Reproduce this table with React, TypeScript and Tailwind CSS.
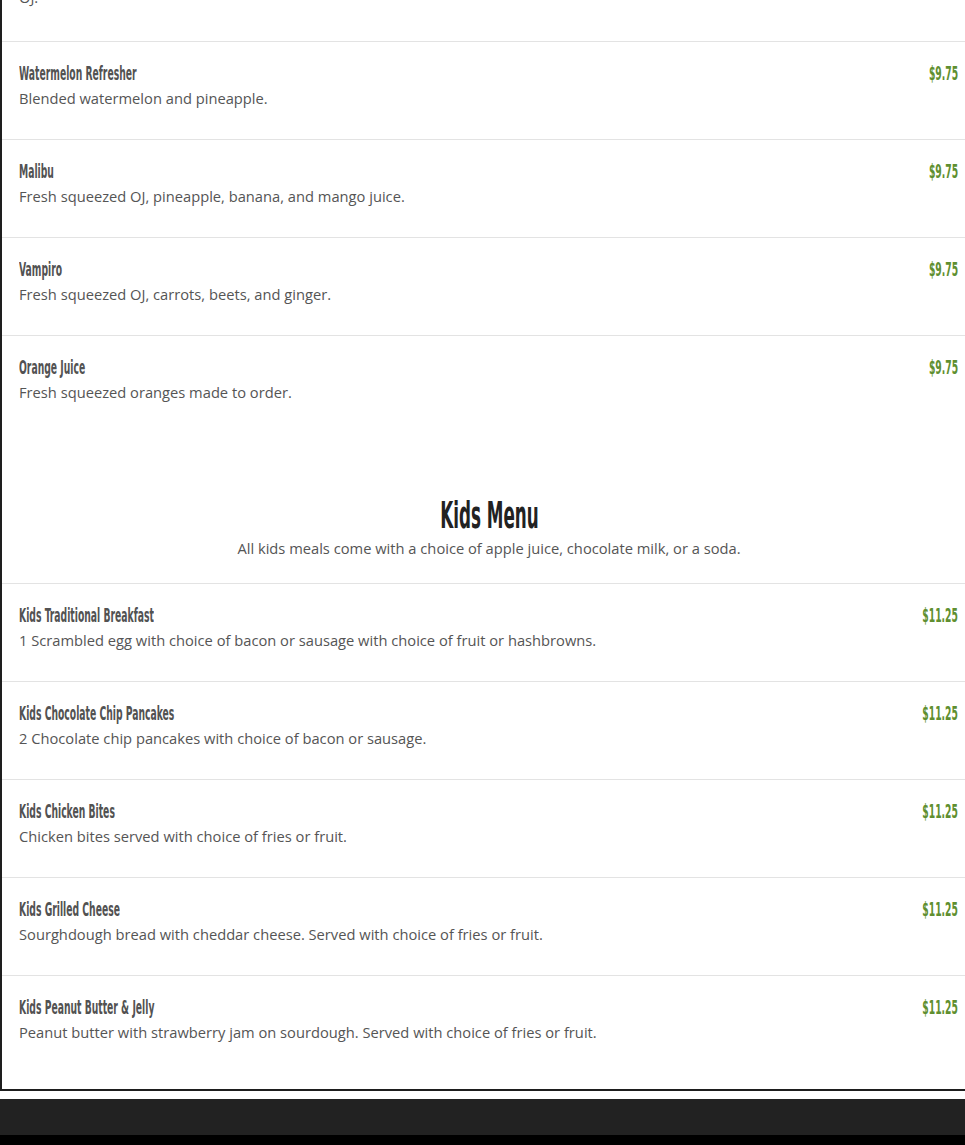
import React from 'react';

const drinks = [
  { name: 'Watermelon Refresher', price: '$9.75', desc: 'Blended watermelon and pineapple.' },
  { name: 'Malibu', price: '$9.75', desc: 'Fresh squeezed OJ, pineapple, banana, and mango juice.' },
  { name: 'Vampiro', price: '$9.75', desc: 'Fresh squeezed OJ, carrots, beets, and ginger.' },
  { name: 'Orange Juice', price: '$9.75', desc: 'Fresh squeezed oranges made to order.' },
];

const kids = [
  {
    name: 'Kids Traditional Breakfast',
    price: '$11.25',
    desc: '1 Scrambled egg with choice of bacon or sausage with choice of fruit or hashbrowns.',
  },
  {
    name: 'Kids Chocolate Chip Pancakes',
    price: '$11.25',
    desc: '2 Chocolate chip pancakes with choice of bacon or sausage.',
  },
  { name: 'Kids Chicken Bites', price: '$11.25', desc: 'Chicken bites served with choice of fries or fruit.' },
  {
    name: 'Kids Grilled Cheese',
    price: '$11.25',
    desc: 'Sourghdough bread with cheddar cheese. Served with choice of fries or fruit.',
  },
  {
    name: 'Kids Peanut Butter & Jelly',
    price: '$11.25',
    desc: 'Peanut butter with strawberry jam on sourdough. Served with choice of fries or fruit.',
  },
];

const condensed = "font-['DejaVu_Sans_Condensed','DejaVu_Sans',sans-serif]";
const body = "font-['Open_Sans','Noto_Sans',sans-serif]";

function MenuItem({ name, price, desc }: { name: string; price: string; desc: string }) {
  return (
    <div className="h-[98px] border-t border-[#e3e3e3]">
      <div className="w-[963px] pl-[17px] pr-[7px] pt-[19px]">
        <div className="flex items-start justify-between">
          <span
            className={`${condensed} inline-block origin-left scale-x-[0.54] text-[19px] leading-[24px] font-bold text-[#525252] whitespace-nowrap`}
          >
            {name}
          </span>
          <span
            className={`${condensed} inline-block origin-right scale-x-[0.54] text-[19px] leading-[24px] font-bold text-[#5f8f30] whitespace-nowrap`}
          >
            {price}
          </span>
        </div>
        <p className={`${body} mt-[3px] text-[14.7px] leading-[20px] text-[#555]`}>{desc}</p>
      </div>
    </div>
  );
}

export default function App() {
  return (
    <div className="w-[965px] h-[1145px] overflow-hidden bg-white">
      <div className="w-[990px] border-l-2 border-b-2 border-[#1e1e1e]">
        {/* cut-off item above */}
        <div className="flex h-[41px] flex-col pl-[17px]">
          <p className={`${body} -mt-[13px] text-[14.7px] leading-[20px] text-[#555]`}>OJ.</p>
        </div>

        {drinks.map((d) => (
          <MenuItem key={d.name} {...d} />
        ))}

        {/* Kids Menu header */}
        <div className="flex h-[150px] w-[974px] flex-col items-center pt-[58px]">
          <h2
            className={`${condensed} origin-center scale-x-[0.49] text-[38px] leading-[48px] font-bold text-[#222] whitespace-nowrap`}
          >
            Kids Menu
          </h2>
          <p className={`${body} -mt-[1px] text-[14.7px] leading-[20px] text-[#555]`}>
            All kids meals come with a choice of apple juice, chocolate milk, or a soda.
          </p>
        </div>

        {kids.map((d) => (
          <MenuItem key={d.name} {...d} />
        ))}
        <div className="h-[16px]" />
      </div>

      <div className="h-[8px]" />
      <div className="h-[36px] bg-[#222]" />
      <div className="h-[10px] bg-black" />
    </div>
  );
}
